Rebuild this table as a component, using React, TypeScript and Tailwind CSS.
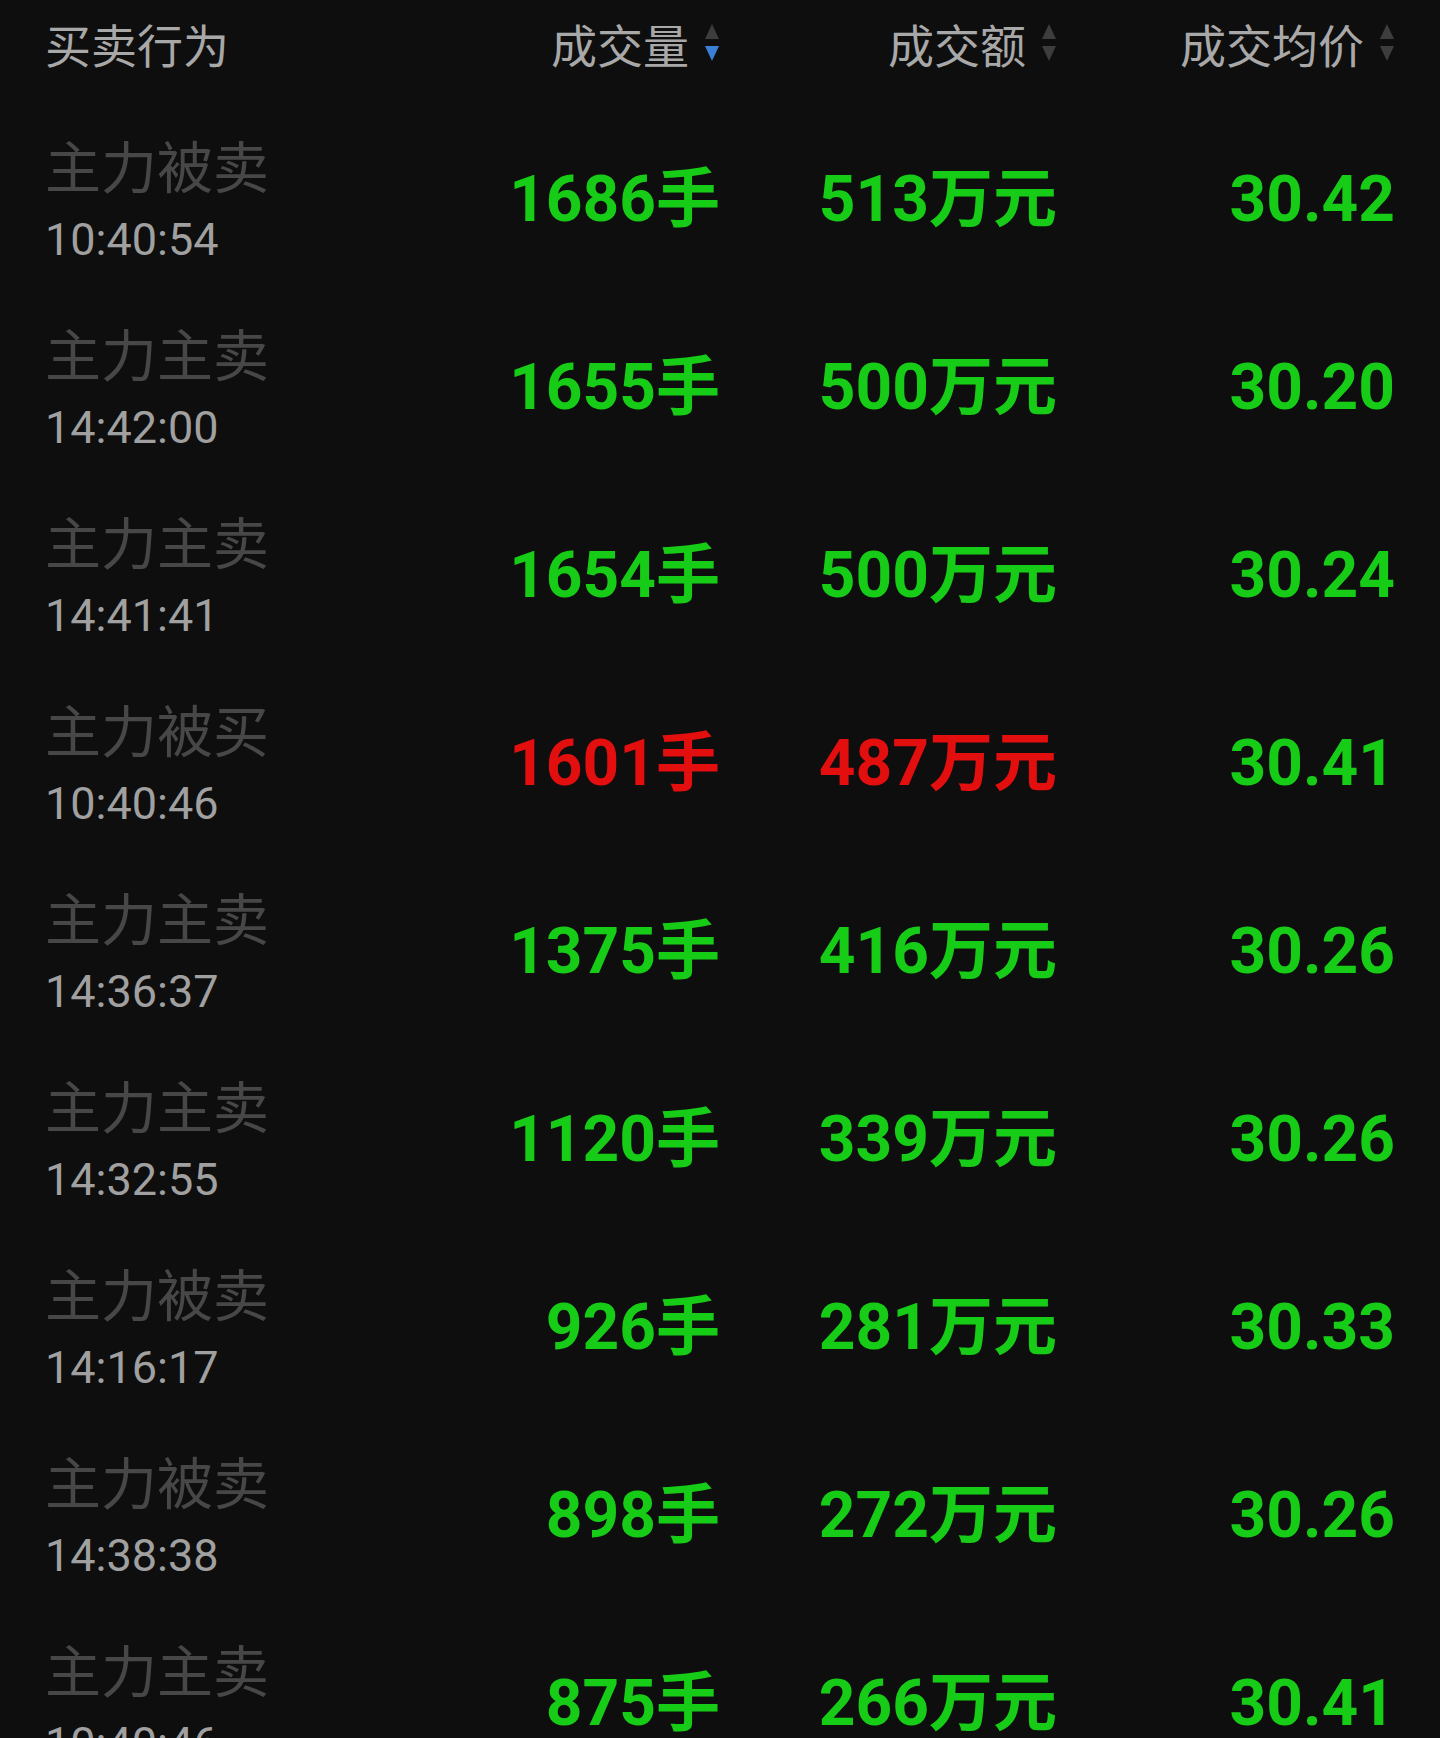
import React from "react";

type Row = { label: string; time: string; vol: string; amt: string; price: string; red?: boolean };

const rows: Row[] = [
  { label: "主力被卖", time: "10:40:54", vol: "1686", amt: "513", price: "30.42" },
  { label: "主力主卖", time: "14:42:00", vol: "1655", amt: "500", price: "30.20" },
  { label: "主力主卖", time: "14:41:41", vol: "1654", amt: "500", price: "30.24" },
  { label: "主力被买", time: "10:40:46", vol: "1601", amt: "487", price: "30.41", red: true },
  { label: "主力主卖", time: "14:36:37", vol: "1375", amt: "416", price: "30.26" },
  { label: "主力主卖", time: "14:32:55", vol: "1120", amt: "339", price: "30.26" },
  { label: "主力被卖", time: "14:16:17", vol: "926", amt: "281", price: "30.33" },
  { label: "主力被卖", time: "14:38:38", vol: "898", amt: "272", price: "30.26" },
  { label: "主力主卖", time: "10:40:46", vol: "875", amt: "266", price: "30.41" },
];

const cjk = { fontFamily: '"Noto Sans CJK SC", sans-serif' };
const num = { fontFamily: 'Roboto, "Noto Sans CJK SC", sans-serif' };

function SortIcon({ active }: { active?: boolean }) {
  return (
    <svg width="16" height="40" viewBox="0 0 16 40" className="ml-[15px]">
      <path d="M8 1 L15 16 L1 16 Z" fill="#3d3d3d" />
      <path d="M1 23 L15 23 L8 38 Z" fill={active ? "#3b7fd6" : "#3d3d3d"} />
    </svg>
  );
}

export default function App() {
  return (
    <div className="w-[1440px] h-[1738px] overflow-hidden bg-[#0e0e0e] pl-[45px] pr-[45px]">
      <div
        className="grid grid-cols-[300px_375px_337px_338px] h-[86px] items-center text-[46px] text-[#a8a8a8]"
        style={cjk}
      >
        <div className="leading-none">买卖行为</div>
        <div className="flex items-center justify-end leading-none">
          <span>成交量</span>
          <SortIcon active />
        </div>
        <div className="flex items-center justify-end leading-none">
          <span>成交额</span>
          <SortIcon />
        </div>
        <div className="flex items-center justify-end leading-none">
          <span>成交均价</span>
          <SortIcon />
        </div>
      </div>
      <div className="pt-[20px]">
        {rows.map((r, i) => {
          const color = r.red ? "text-[#e30e0e]" : "text-[#17cc17]";
          return (
            <div
              key={i}
              className="grid grid-cols-[300px_375px_337px_338px] h-[188px] items-center"
            >
              <div className="flex flex-col">
                <div className="text-[56px] leading-[60px] text-[#474747]" style={cjk}>
                  {r.label}
                </div>
                <div
                  className="text-[45px] leading-[52px] text-[#a0a0a0] mt-[20px]"
                  style={{ fontFamily: "Roboto, sans-serif" }}
                >
                  {r.time}
                </div>
              </div>
              <div className={`text-right text-[64px] font-bold leading-none ${color}`} style={num}>
                {r.vol}手
              </div>
              <div className={`text-right text-[64px] font-bold leading-none ${color}`} style={num}>
                {r.amt}万元
              </div>
              <div className="text-right text-[64px] font-bold leading-none text-[#17cc17]" style={num}>
                {r.price}
              </div>
            </div>
          );
        })}
      </div>
    </div>
  );
}
